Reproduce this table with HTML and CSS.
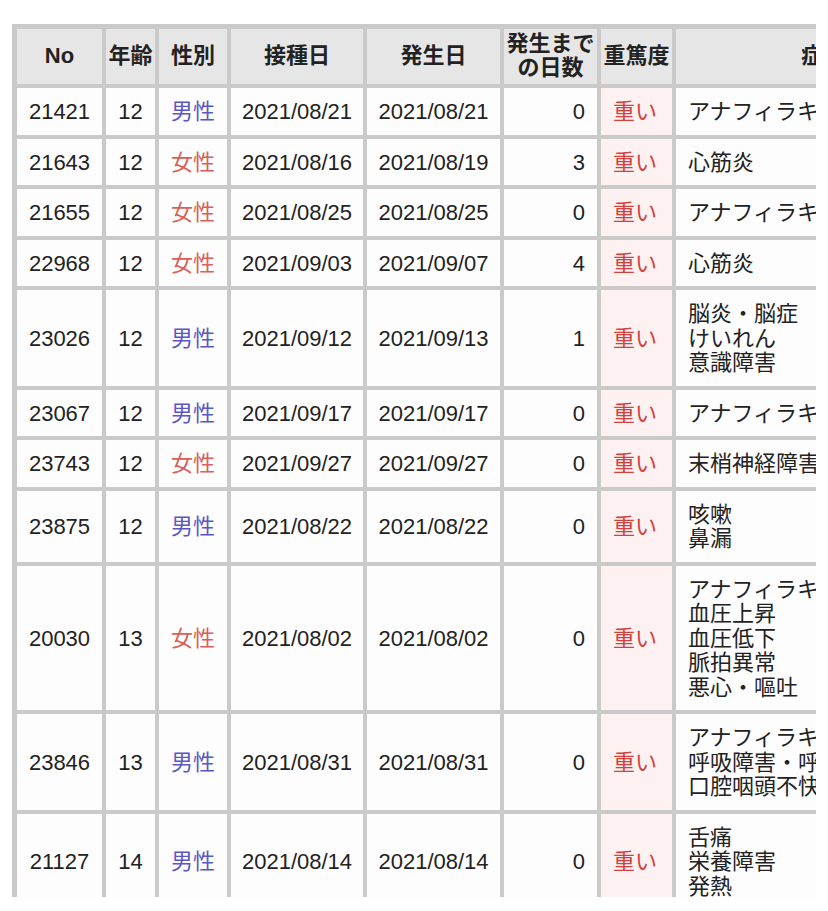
FILE: index.html
```html
<!DOCTYPE html>
<html lang="ja">
<head>
<meta charset="utf-8">
<title>副反応報告</title>
<link rel="stylesheet" href="styles.css">
</head>
<body>
<div class="page">
  <div class="clip">
    <table class="report">
      <colgroup>
        <col class="c-no"><col class="c-age"><col class="c-sex"><col class="c-date"><col class="c-date2"><col class="c-days"><col class="c-sev"><col class="c-sym">
      </colgroup>
      <thead>
        <tr>
          <th>No</th><th>年齢</th><th>性別</th><th>接種日</th><th>発生日</th><th>発生まで<br>の日数</th><th>重篤度</th><th>症状</th>
        </tr>
      </thead>
      <tbody>
        <tr><td>21421</td><td>12</td><td class="m">男性</td><td>2021/08/21</td><td>2021/08/21</td><td class="days">0</td><td class="sev">重い</td><td class="sym">アナフィラキシー</td></tr>
        <tr><td>21643</td><td>12</td><td class="f">女性</td><td>2021/08/16</td><td>2021/08/19</td><td class="days">3</td><td class="sev">重い</td><td class="sym">心筋炎</td></tr>
        <tr><td>21655</td><td>12</td><td class="f">女性</td><td>2021/08/25</td><td>2021/08/25</td><td class="days">0</td><td class="sev">重い</td><td class="sym">アナフィラキシー</td></tr>
        <tr><td>22968</td><td>12</td><td class="f">女性</td><td>2021/09/03</td><td>2021/09/07</td><td class="days">4</td><td class="sev">重い</td><td class="sym">心筋炎</td></tr>
        <tr><td>23026</td><td>12</td><td class="m">男性</td><td>2021/09/12</td><td>2021/09/13</td><td class="days">1</td><td class="sev">重い</td><td class="sym">脳炎・脳症<br>けいれん<br>意識障害</td></tr>
        <tr><td>23067</td><td>12</td><td class="m">男性</td><td>2021/09/17</td><td>2021/09/17</td><td class="days">0</td><td class="sev">重い</td><td class="sym">アナフィラキシー</td></tr>
        <tr><td>23743</td><td>12</td><td class="f">女性</td><td>2021/09/27</td><td>2021/09/27</td><td class="days">0</td><td class="sev">重い</td><td class="sym">末梢神経障害</td></tr>
        <tr><td>23875</td><td>12</td><td class="m">男性</td><td>2021/08/22</td><td>2021/08/22</td><td class="days">0</td><td class="sev">重い</td><td class="sym">咳嗽<br>鼻漏</td></tr>
        <tr><td>20030</td><td>13</td><td class="f">女性</td><td>2021/08/02</td><td>2021/08/02</td><td class="days">0</td><td class="sev">重い</td><td class="sym">アナフィラキシー<br>血圧上昇<br>血圧低下<br>脈拍異常<br>悪心・嘔吐</td></tr>
        <tr><td>23846</td><td>13</td><td class="m">男性</td><td>2021/08/31</td><td>2021/08/31</td><td class="days">0</td><td class="sev">重い</td><td class="sym">アナフィラキシー<br>呼吸障害・呼吸不全<br>口腔咽頭不快感</td></tr>
        <tr><td>21127</td><td>14</td><td class="m">男性</td><td>2021/08/14</td><td>2021/08/14</td><td class="days">0</td><td class="sev">重い</td><td class="sym">舌痛<br>栄養障害<br>発熱</td></tr>
      </tbody>
    </table>
  </div>
</div>
</body>
</html>
```
FILE: styles.css
```css
html, body {
  margin: 0;
  padding: 0;
  background: #ffffff;
}

.page {
  padding: 24px 0 0 12px;
}

.clip {
  width: 804px;
  height: 873px;
  overflow: hidden;
}

.report {
  table-layout: fixed;
  width: 963px;
  border-collapse: separate;
  border-spacing: 4px;
  border: 1px solid #cacaca;
  background: #cacaca;
  font-family: "Liberation Sans", "Noto Sans CJK JP", sans-serif;
  font-size: 22px;
  line-height: 24.5px;
  color: #222222;
}

.c-no { width: 85px; }
.c-age { width: 49px; }
.c-sex { width: 68px; }
.c-date { width: 132px; }
.c-date2 { width: 133px; }
.c-days { width: 93px; }
.c-sev { width: 71px; }
.c-sym { width: 294px; }

.report th {
  background: #e6e6e6;
  font-weight: bold;
  line-height: 24px;
  padding: 3px 0 4px;
  text-align: center;
  vertical-align: middle;
  white-space: nowrap;
  box-sizing: border-box;
}

.report td {
  background: #fdfdfd;
  padding: 12px 0 10px;
  text-align: center;
  vertical-align: middle;
  white-space: nowrap;
  box-sizing: border-box;
}

.report td.m {
  color: #5d57c6;
}

.report td.f {
  color: #d9605a;
}

.report td.days {
  text-align: right;
  padding-right: 12px;
}

.report td.sev {
  background: #fdf1f1;
  color: #d4403c;
  text-align: left;
  padding-left: 12px;
}

.report td.sym {
  text-align: left;
  padding-left: 12px;
}
```
